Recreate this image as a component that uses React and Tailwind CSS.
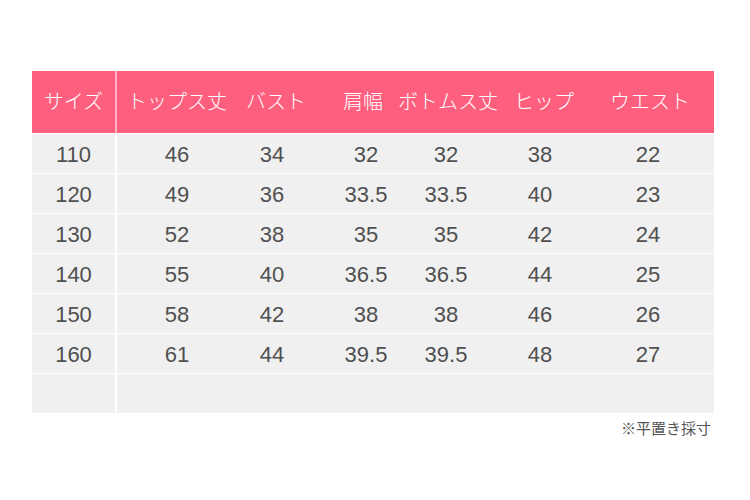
import React from "react";

const cols = [
  { w: "w-[85px]", h: "サイズ", hp: "" },
  { w: "w-[120px]", h: "トップス丈", hp: "" },
  { w: "w-[70px]", h: "バスト", hp: "pl-[8px]" },
  { w: "w-[118px]", h: "肩幅", hp: "pr-[6px]" },
  { w: "w-[42px]", h: "ボトムス丈", hp: "pl-[4px]" },
  { w: "w-[146px]", h: "ヒップ", hp: "pl-[8px]" },
  { w: "w-[70px]", h: "ウエスト", hp: "pl-[4px]" },
];

const rows = [
  ["110", "46", "34", "32", "32", "38", "22"],
  ["120", "49", "36", "33.5", "33.5", "40", "23"],
  ["130", "52", "38", "35", "35", "42", "24"],
  ["140", "55", "40", "36.5", "36.5", "44", "25"],
  ["150", "58", "42", "38", "38", "46", "26"],
  ["160", "61", "44", "39.5", "39.5", "48", "27"],
  ["", "", "", "", "", "", ""],
];

const jp = { fontFamily: '"Liberation Sans", "Noto Sans CJK JP", sans-serif' };

export default function App() {
  return (
    <div className="w-[750px] h-[500px] bg-white pt-[71px] pl-[32px]" style={jp}>
      <div className="w-[682px]">
        <div className="flex h-[62px] bg-[#ff5f7f] text-white text-[20px] font-light">
          {cols.map((c, i) => (
            <div
              key={i}
              className={`${c.w} ${c.hp} flex items-center justify-center whitespace-nowrap ${i === 0 ? "border-r-[2px] border-[#ffb3c2]" : ""}`}
            >
              {c.h}
            </div>
          ))}
        </div>
        {rows.map((r, ri) => (
          <div key={ri} className="flex h-[40px] bg-[#f0f0f0] border-t border-white first:border-t-0">
            {r.map((v, ci) => (
              <div
                key={ci}
                className={`${cols[ci].w} flex items-center justify-center whitespace-nowrap text-[22px] text-[#505050] pt-[2px] ${ci === 0 ? "border-r-[2px] border-white" : ""}`}
              >
                {v}
              </div>
            ))}
          </div>
        ))}
        <div className="flex justify-end pt-[5px] pr-[3px] text-[15px] text-[#555555]">※平置き採寸</div>
      </div>
    </div>
  );
}
